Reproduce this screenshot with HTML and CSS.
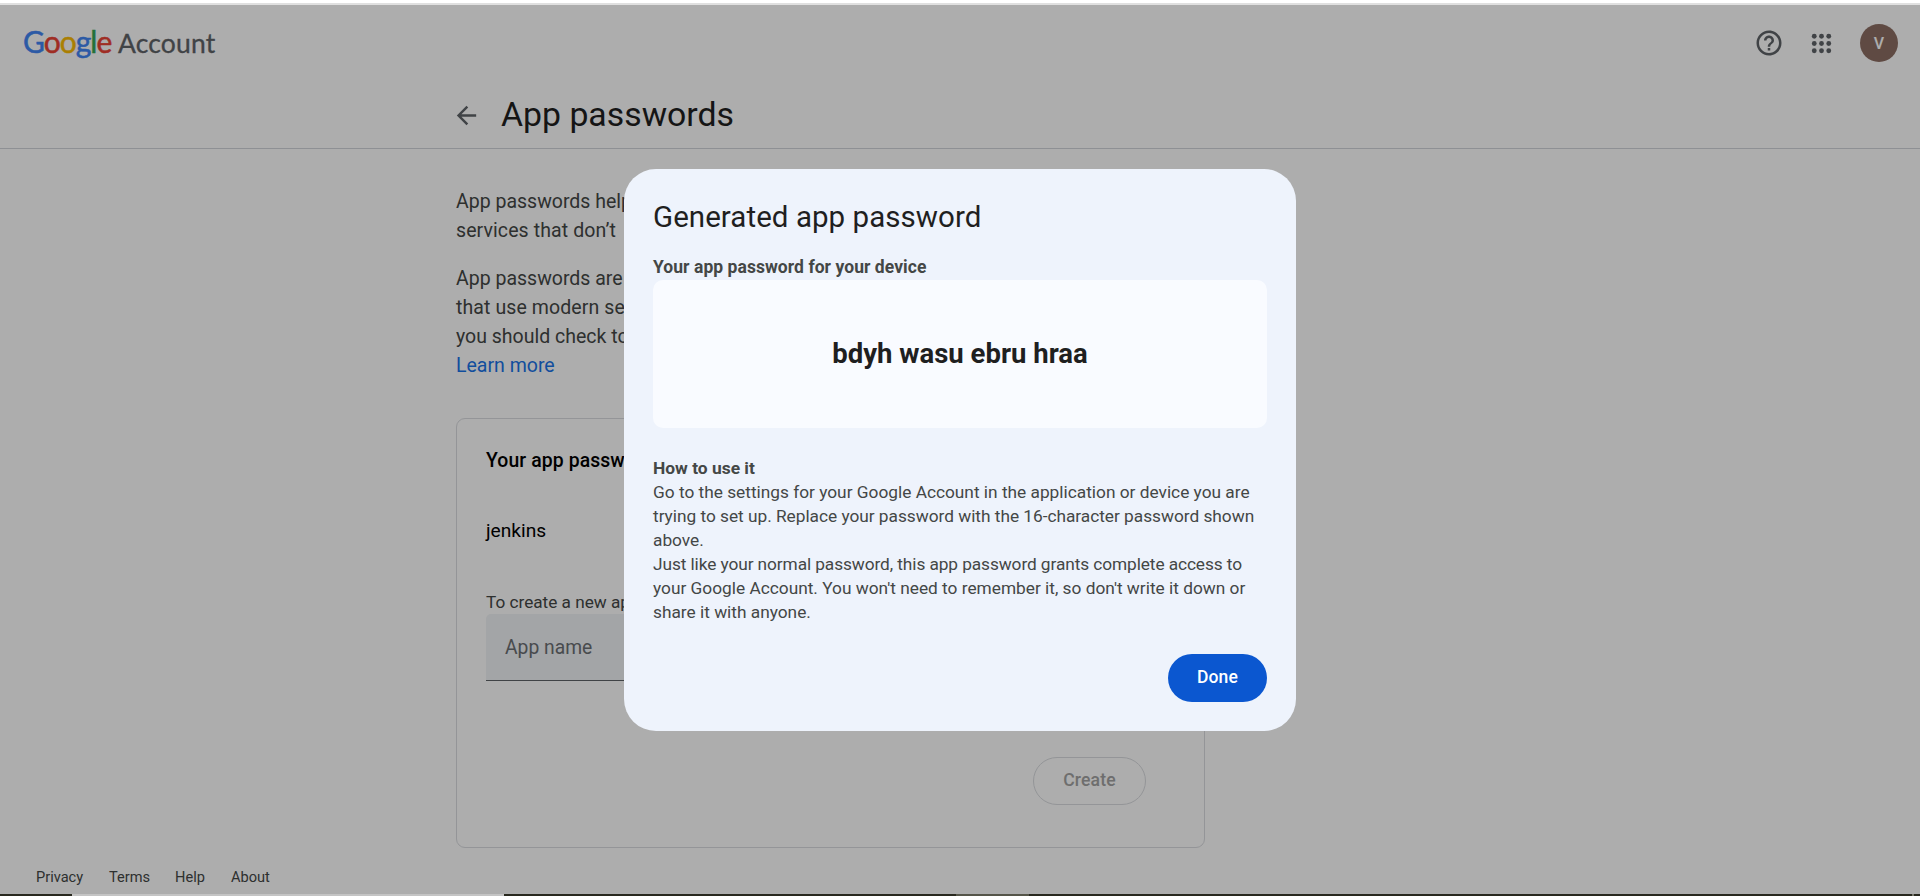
FILE: index.html
```html
<!DOCTYPE html>
<html lang="en">
<head>
<meta charset="utf-8">
<title>App passwords</title>
<link rel="stylesheet" href="styles.css">
</head>
<body>
<div class="window">
  <div class="top-edge"></div>
  <div class="page">
    <header class="header">
      <div class="logo">
        <span class="google"><span class="blue">G</span><span class="red">o</span><span class="yellow">o</span><span class="blue">g</span><span class="green">l</span><span class="red">e</span></span>
        <span class="product">Account</span>
      </div>
      <div class="actions">
        <svg class="icon help" viewBox="0 0 24 24"><path d="M11 18h2v-2h-2v2zm1-16C6.48 2 2 6.48 2 12s4.480 10 10 10 10-4.480 10-10S17.520 2 12 2zm0 18c-4.410 0-8-3.590-8-8s3.590-8 8-8 8 3.590 8 8-3.590 8-8 8zm0-14c-2.210 0-4 1.790-4 4h2c0-1.100.9-2 2-2s2 .9 2 2c0 2-3 1.750-3 5h2c0-2.250 3-2.500 3-5 0-2.210-1.790-4-4-4z"/></svg>
        <svg class="icon apps" viewBox="0 0 24 24"><circle cx="6" cy="6" r="2"/><circle cx="12" cy="6" r="2"/><circle cx="18" cy="6" r="2"/><circle cx="6" cy="12" r="2"/><circle cx="12" cy="12" r="2"/><circle cx="18" cy="12" r="2"/><circle cx="6" cy="18" r="2"/><circle cx="12" cy="18" r="2"/><circle cx="18" cy="18" r="2"/></svg>
        <div class="avatar">V</div>
      </div>
    </header>
    <div class="title-bar">
      <svg class="icon back" viewBox="0 0 24 24"><path d="M20 11H7.830l5.590-5.590L12 4l-8 8 8 8 1.410-1.410L7.830 13H20v-2z"/></svg>
      <h1 class="page-title">App passwords</h1>
    </div>
    <main class="content">
      <p class="para">App passwords help<br><span class="loose">services that don’t</span></p>
      <p class="para">App passwords are<br><span class="loose">that use modern se</span><br>you should check to<br><a class="link">Learn more</a></p>
      <section class="card">
        <h2 class="card-title">Your app passw</h2>
        <div class="app">jenkins</div>
        <div class="hint">To create a new ap</div>
        <div class="field">App name</div>
        <div class="create-row"><button class="create">Create</button></div>
      </section>
    </main>
    <footer class="footer"><a class="f-privacy">Privacy</a><a class="f-terms">Terms</a><a class="f-help">Help</a><a>About</a></footer>
    <div class="scrim">
      <div class="dialog">
        <h2 class="dialog-title">Generated app password</h2>
        <div class="label">Your app password for your device</div>
        <div class="password">bdyh wasu ebru hraa</div>
        <div class="how">How to use it</div>
        <div class="text">Go to the settings for your Google Account in the application or device you are<br><span class="tight-line">trying to set up. Replace your password with the 16-character password shown</span><br>above.</div>
        <div class="text"><span class="tight">Just like your normal password, this app password grants complete access to</span><br>your Google Account. You won't need to remember it, so don't write it down or<br>share it with anyone.</div>
        <div class="dialog-actions"><button class="done">Done</button></div>
      </div>
    </div>
  </div>
  <div class="taskbar"><div class="search"></div><div class="active"></div><div class="desk"></div></div>
</div>
</body>
</html>
```
FILE: styles.css
```css
* { box-sizing: border-box; }
body { margin: 0; font-family: Roboto, "Liberation Sans", sans-serif; background: #fff; }
h1, h2, p { margin: 0; font-weight: 400; }
button { font-family: inherit; margin: 0; }
.window { display: flex; flex-direction: column; width: 1920px; height: 896px; overflow: hidden; }
.top-edge { height: 5px; border-bottom: 2px solid #e0e0e0; flex: none; }
.page { position: relative; display: flex; flex-direction: column; height: 889px; background: #fff; }

.header { display: flex; justify-content: space-between; height: 76px; padding: 0 22px 0 23px; align-items: center; flex: none; }
.logo { display: flex; align-items: baseline; padding-bottom: 4px; font-family: Lato, sans-serif; }
.google { font-size: 30px; letter-spacing: -1px; -webkit-text-stroke: .5px currentColor; width: 95px; }
.blue { color: #4285f4; -webkit-text-stroke-color: #4285f4; }
.red { color: #ea4335; -webkit-text-stroke-color: #ea4335; }
.yellow { color: #fbbc05; -webkit-text-stroke-color: #fbbc05; }
.green { color: #34a853; -webkit-text-stroke-color: #34a853; }
.product { font-size: 26.5px; color: #5f6368; letter-spacing: .15px; -webkit-text-stroke: .3px #5f6368; }
.actions { display: flex; align-items: center; }
.icon { display: block; fill: #5f6368; }
.help { width: 30px; height: 30px; }
.apps { width: 29px; height: 29px; margin-left: 23px; }
.avatar { width: 38px; height: 38px; margin-left: 24px; border-radius: 50%; background: #8d6e63; color: #fff; font-size: 16px; font-weight: 500; line-height: 39px; text-align: center; }

.title-bar { display: flex; align-items: center; height: 68px; padding-left: 452px; border-bottom: 1px solid #d2d4db; flex: none; }
.back { width: 29px; height: 29px; margin-top: 1px; }
.page-title { margin-left: 20px; font-size: 33.8px; line-height: 40px; color: #1f1f1f; }

.content { width: 749px; margin-left: 456px; padding-top: 38px; white-space: nowrap; }
.para { font-size: 19.5px; line-height: 29px; color: #444746; margin-bottom: 19px; }
.loose { letter-spacing: .1px; }
.link { color: #1a73e8; }
.card { height: 430px; margin-top: 38px; padding: 27px 58px 0 29px; border: 1px solid #dadce0; border-radius: 9px; }
.card-title { font-size: 19.4px; font-weight: 500; line-height: 29px; letter-spacing: .1px; color: #000; }
.app { margin-top: 41px; font-size: 19.2px; line-height: 29px; color: #000; }
.hint { margin-top: 45px; font-size: 17.2px; line-height: 24px; color: #444746; }
.field { width: 660px; height: 67px; padding-left: 19px; border-bottom: 1px solid #5f6368; border-radius: 5px 5px 0 0; background: #f1f3f6; font-size: 19.3px; line-height: 67px; color: #6b6f73; }
.create-row { display: flex; justify-content: flex-end; margin-top: 76px; }
.create { width: 113px; height: 48px; padding: 0 0 2px; border: 1px solid #dadce0; border-radius: 24px; background: transparent; color: #a3a3a3; font-size: 17.6px; font-weight: 500; letter-spacing: .15px; }

.footer { display: flex; margin-top: 18px; padding-left: 35px; font-size: 14.6px; line-height: 22px; color: #444746; }
.f-privacy { width: 73px; }
.f-terms { width: 66px; }
.f-help { width: 56px; }
.footer a { padding: 0 1px; }

.scrim { position: absolute; inset: 0; background: rgba(0, 0, 0, .32); }
.dialog { width: 672px; height: 562px; margin: 164px 0 0 624px; padding: 29px; border-radius: 32px; background: #eef3fc; white-space: nowrap; color: #444746; }
.dialog-title { font-size: 29.5px; line-height: 38px; letter-spacing: .05px; color: #1f1f1f; }
.label { margin-top: 19px; padding-bottom: 1px; font-size: 17.5px; font-weight: 700; line-height: 24px; letter-spacing: .05px; }
.password { display: flex; align-items: center; justify-content: center; height: 148px; padding-bottom: 2px; border-radius: 10px; background: #f9fbff; color: #1f1f1f; font-size: 27.5px; font-weight: 700; }
.how { margin-top: 28px; font-size: 17.4px; font-weight: 700; line-height: 24px; }
.text { font-size: 17.3px; line-height: 24px; }
.tight { letter-spacing: -.09px; }
.tight-line { letter-spacing: -.02px; }
.dialog-actions { display: flex; justify-content: flex-end; margin-top: 30px; }
.done { width: 99px; height: 48px; padding: 0 0 2px; border: 0; border-radius: 24px; background: #0b57d0; color: #fff; font-size: 17.5px; font-weight: 500; letter-spacing: .1px; }

.taskbar { display: flex; height: 2px; background: #28281e; flex: none; }
.search { width: 432px; margin-left: 72px; background: #c4c4c4; }
.active { width: 73px; margin-left: 452px; background: #555549; }
.desk { width: 2px; margin-left: 883px; background: #77776c; }
```
